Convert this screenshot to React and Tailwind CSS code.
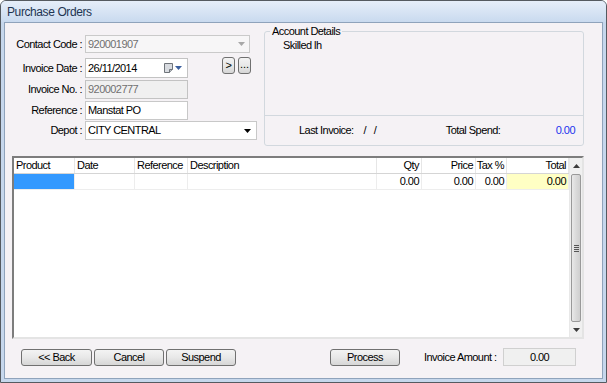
import React from "react";

const Arrow = ({ color = "#000", up = false }) => (
  <svg width="7" height="4" viewBox="0 0 7 4">
    <path d={up ? "M0 4h7L3.5 0z" : "M0 0h7L3.5 4z"} fill={color} />
  </svg>
);

const Btn = ({ children, className = "" }) => (
  <div
    className={
      "h-[17px] flex items-center justify-center border border-[#707070] rounded-[3px] bg-gradient-to-b from-[#f3f3f3] via-[#e8e8e8] to-[#d6d6d6] text-black " +
      className
    }
  >
    {children}
  </div>
);

const columns = [
  { name: "Product", w: "w-[61px]", right: false },
  { name: "Date", w: "w-[60px]", right: false },
  { name: "Reference", w: "w-[53px]", right: false },
  { name: "Description", w: "w-[189px]", right: false },
  { name: "Qty", w: "w-[45px]", right: true },
  { name: "Price", w: "w-[54px]", right: true },
  { name: "Tax %", w: "w-[31px]", right: true },
  { name: "Total", w: "w-[62px]", right: true },
];

const App = () => {
  return (
    <div className="w-[607px] h-[383px] flex flex-col bg-[#c6d7ec] border border-[#555a60] rounded-t-[6px] overflow-hidden font-['Liberation_Sans',Arial,sans-serif] text-[11px] tracking-[-0.55px] whitespace-nowrap text-black leading-none">
      <div className="h-[21px] shrink-0 flex items-center pl-[6px] bg-gradient-to-b from-[#e6eef9] to-[#c9daef] text-[12px] tracking-[-0.4px] text-[#1e3552]">
        Purchase Orders
      </div>

      <div className="flex-1 mx-[3px] mb-[3px] border border-[#8fa3bb] bg-[#f5f2f5] flex flex-col">
        {/* top section */}
        <div className="h-[133px] flex shrink-0">
          <div className="w-[259px] pt-[12px] flex flex-col">
            <div className="h-[18px] flex items-center">
              <span className="w-[77px] text-right">Contact Code :</span>
              <div className="ml-[3px] w-[165px] h-full border border-[#cacaca] bg-[#f7f6f7] flex items-center pl-[2px] pr-[4px] text-[#707070]">
                <span className="flex-1">920001907</span>
                <Arrow color="#a8a8a8" />
              </div>
            </div>

            <div className="mt-[5px] h-[20px] flex items-start">
              <span className="w-[77px] text-right self-center">Invoice Date :</span>
              <div className="ml-[3px] w-[103px] h-full border border-[#c3c3c3] bg-white flex items-center pl-[2px] pr-[5px]">
                <span className="flex-1">26/11/2014</span>
                <svg width="9" height="10" viewBox="0 0 9 10">
                  <path d="M0.5 0.5h8v6l-3 3h-5z" fill="#d8dbe0" stroke="#6f747a" />
                  <path d="M5.5 9.5v-3h3" fill="#b8bcc2" stroke="#6f747a" />
                </svg>
                <span className="ml-[2px]">
                  <Arrow color="#3b5f9e" />
                </span>
              </div>
              <Btn className="ml-[34px] w-[13px] -mt-[1px]">&gt;</Btn>
              <Btn className="ml-[3px] w-[13px] -mt-[1px] items-end pb-[3px] tracking-normal">...</Btn>
            </div>

            <div className="mt-[2px] h-[19px] flex items-center">
              <span className="w-[77px] text-right">Invoice No. :</span>
              <div className="ml-[3px] w-[103px] h-full border border-[#c3c3c3] bg-[#f0f0f0] flex items-center pl-[2px] text-[#707070]">
                920002777
              </div>
            </div>

            <div className="mt-[2px] h-[19px] flex items-center">
              <span className="w-[77px] text-right">Reference :</span>
              <div className="ml-[3px] w-[103px] h-full border border-[#c8c8c8] bg-white flex items-center pl-[2px]">
                Manstat PO
              </div>
            </div>

            <div className="mt-[1px] h-[19px] flex items-center">
              <span className="w-[77px] text-right">Depot :</span>
              <div className="ml-[3px] w-[172px] h-full border border-[#c8c8c8] bg-white flex items-center pl-[2px] pr-[5px]">
                <span className="flex-1">CITY CENTRAL</span>
                <Arrow color="#000" />
              </div>
            </div>
          </div>

          <fieldset className="mt-[2px] w-[320px] h-[121px] border border-[#d2d8de] rounded-[3px]">
            <legend className="ml-[5px] px-[2px] leading-[13px]">Account Details</legend>
            <div className="h-[107px] flex flex-col">
              <div className="pl-[18px] pt-[2px] flex-1">Skilled lh</div>
              <div className="h-[30px] border-t border-[#d2d8de] flex items-center pr-[8px]">
                <span className="ml-[34px]">Last Invoice:</span>
                <span className="ml-[10px] tracking-[2px]">/ /</span>
                <span className="ml-[67px]">Total Spend:</span>
                <span className="ml-auto text-[#2233ee]">0.00</span>
              </div>
            </div>
          </fieldset>
        </div>

        {/* grid */}
        <div className="ml-[7px] w-[572px] h-[183px] shrink-0 flex border-2 border-t-[#7d7d7d] border-l-[#7d7d7d] border-r-[#e4e4e4] border-b-[#e4e4e4] bg-white">
          <div className="flex-1 flex flex-col">
            <div className="h-[16px] flex border-b border-[#d5d5d5]">
              {columns.map((c) => (
                <div
                  key={c.name}
                  className={
                    c.w +
                    " h-full flex items-center border-r border-[#e6e6e6] " +
                    (c.right ? "justify-end pr-[2px]" : "pl-[2px]")
                  }
                >
                  {c.name}
                </div>
              ))}
            </div>
            <div className="h-[16px] flex border-b border-[#ededed]">
              {columns.map((c, i) => (
                <div
                  key={c.name}
                  className={
                    c.w +
                    " h-full flex items-center border-r border-[#ededed] " +
                    (c.right ? "justify-end pr-[2px] " : "pl-[2px] ") +
                    (i === 0 ? "bg-[#3399ff]" : "") +
                    (i === 7 ? "bg-[#ffffc4]" : "")
                  }
                >
                  {c.right ? "0.00" : ""}
                </div>
              ))}
            </div>
          </div>

          {/* scrollbar */}
          <div className="w-[14px] flex flex-col bg-[#f0f0f0] border-l border-[#e8e8e8]">
            <div className="h-[16px] flex items-center justify-center">
              <Arrow color="#3c3c3c" up />
            </div>
            <div className="mx-[1px] h-[148px] rounded-[2px] border border-[#999999] bg-gradient-to-r from-[#e9e9e9] via-[#dadada] to-[#cfcfcf] flex flex-col items-center justify-center gap-[1px]">
              <div className="w-[5px] h-[1px] bg-[#555]" />
              <div className="w-[5px] h-[1px] bg-[#555]" />
              <div className="w-[5px] h-[1px] bg-[#555]" />
              <div className="w-[5px] h-[1px] bg-[#555]" />
            </div>
            <div className="flex-1 flex items-center justify-center">
              <Arrow color="#3c3c3c" />
            </div>
          </div>
        </div>

        {/* buttons */}
        <div className="mt-[9px] pl-[16px] flex items-center">
          <Btn className="w-[71px]">&lt;&lt; Back</Btn>
          <Btn className="ml-[2px] w-[70px]">Cancel</Btn>
          <Btn className="ml-[2px] w-[70px]">Suspend</Btn>
          <Btn className="ml-[94px] w-[70px]">Process</Btn>
          <span className="ml-[24px] w-[79px]">Invoice Amount :</span>
          <div className="w-[73px] h-[18px] border border-[#d0d0d0] bg-[#f0f0f0] flex items-center justify-center">
            0.00
          </div>
        </div>
      </div>
    </div>
  );
};

export default App;
